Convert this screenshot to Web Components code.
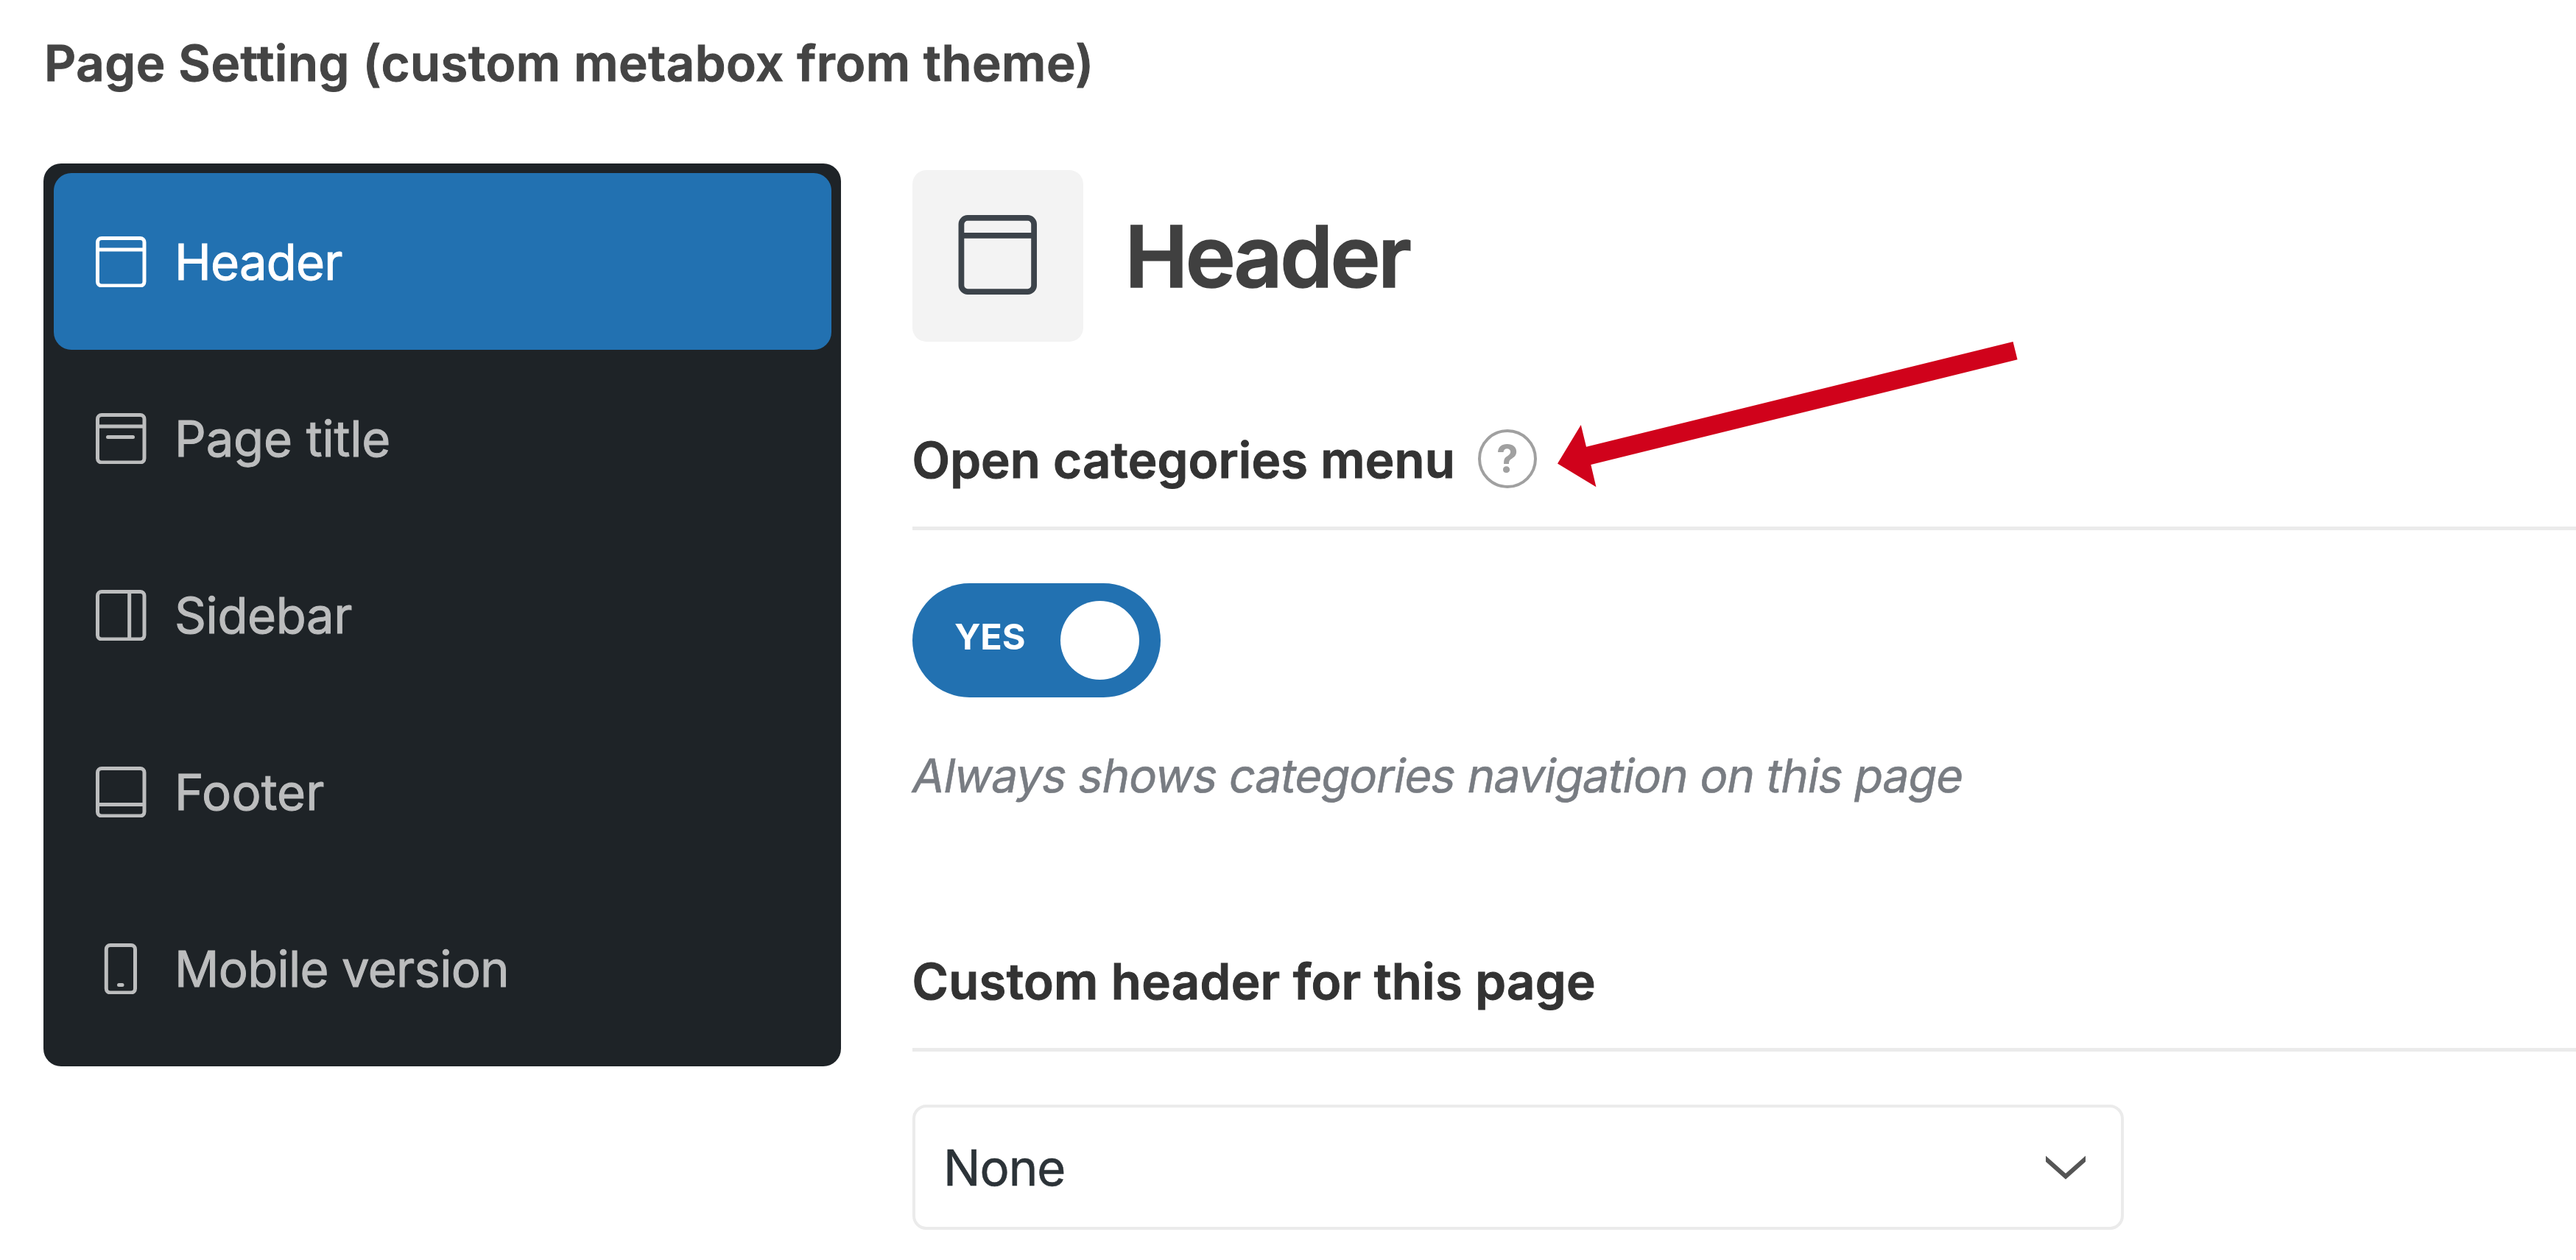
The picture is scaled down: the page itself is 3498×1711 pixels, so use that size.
<!DOCTYPE html>
<html lang="en">
<head>
<meta charset="utf-8">
<title>Page Setting</title>
<style>
  html, body { margin: 0; height: 100%; background: #fff; overflow: hidden; }
  body { font-family: Inter, "Liberation Sans", sans-serif; }
</style>
</head>
<body>
<settings-metabox heading="Page Setting (custom metabox from theme)">
  <settings-nav slot="nav">
    <nav-item icon="header" active style="--track:-.8px">Header</nav-item>
    <nav-item icon="title" style="--track:-.15px">Page title</nav-item>
    <nav-item icon="sidebar" style="--track:-.4px">Sidebar</nav-item>
    <nav-item icon="footer" style="--track:.15px">Footer</nav-item>
    <nav-item icon="mobile" style="--track:-.72px">Mobile version</nav-item>
  </settings-nav>
  <section-title icon="header">Header</section-title>
  <settings-field label="Open categories menu" help style="--space:120px;--track:.15px">
    <toggle-switch>YES</toggle-switch>
    <span slot="note">Always shows categories navigation on this page</span>
  </settings-field>
  <settings-field label="Custom header for this page" style="--space:201px;--track:.31px">
    <select-box>None</select-box>
  </settings-field>
  <pointer-arrow slot="overlay"></pointer-arrow>
</settings-metabox>

<script>
const define = (name, render) => customElements.define(name, class extends HTMLElement {
  constructor() {
    super();
    this.attachShadow({ mode: 'open' });
  }
  connectedCallback() {
    this.shadowRoot.innerHTML = render(this);
  }
});

const frame = '<rect x="2.5" y="2.5" width="63.5" height="64.5" rx="5.5"/>';
const glyphs = {
  header: frame + '<path d="M2.5 18H66"/>',
  title: frame + '<path d="M2.5 18H66"/><path d="M16.5 32.5H50.5" stroke-linecap="round"/>',
  sidebar: frame + '<path d="M45.7 2.5V67"/>',
  footer: frame + '<path d="M2.5 51.6H66"/>',
  mobile: '<rect x="14.3" y="2.5" width="39.2" height="64.5" rx="5.5"/><path d="M31.5 56.5H36" stroke-linecap="round"/>'
};

define('line-icon', el => `
  <style>
    :host { display: block; flex: none; width: var(--icon-w, 68.5px); height: var(--icon-h, 69.5px); }
    svg { display: block; width: 100%; height: 100%; fill: none; stroke: currentColor; stroke-width: 5; }
  </style>
  <svg viewBox="0 0 68.5 69.5">${glyphs[el.getAttribute('name')]}</svg>`);

define('settings-metabox', el => `
  <style>
    :host { display: flex; flex-direction: column; position: relative; box-sizing: border-box;
            width: 100%; height: 100%; padding: 46px 0 0 59px; overflow: hidden; }
    h2 { margin: 0 0 96px 1px; font-size: 67px; line-height: 80px; font-weight: 600;
         letter-spacing: .55px; color: #444; white-space: nowrap; -webkit-text-stroke: 1px currentColor; }
    .body { display: grid; grid-template-columns: 1083px 1fr; column-gap: 96.5px; align-items: start; }
    main { display: flex; flex-direction: column; padding-top: 9px; min-width: 0; }
  </style>
  <h2>${el.getAttribute('heading')}</h2>
  <div class="body">
    <slot name="nav"></slot>
    <main><slot></slot></main>
  </div>
  <slot name="overlay"></slot>`);

define('settings-nav', () => `
  <style>
    :host { display: flex; flex-direction: column; padding: 13px 13.5px; border-radius: 24px; background: #1e2327; }
  </style>
  <slot></slot>`);

define('nav-item', el => `
  <style>
    :host { display: flex; align-items: center; gap: 38.5px; height: 240px; box-sizing: border-box;
            padding: 1px 57.5px 0; border-radius: 24px; color: #bcbdbe;
            font-size: 67px; line-height: 80px; letter-spacing: var(--track, 0); white-space: nowrap;
            -webkit-text-stroke: 1px currentColor; }
    :host([active]) { background: #2271b1; color: #fff; }
  </style>
  <line-icon name="${el.getAttribute('icon')}"></line-icon>
  <span><slot></slot></span>`);

define('section-title', el => `
  <style>
    :host { display: flex; align-items: center; gap: 57px; }
    .tile { display: flex; align-items: center; justify-content: center; box-sizing: border-box;
            width: 232px; height: 233px; padding-bottom: 3px; border-radius: 19px; background: #f3f3f3; color: #3c434a;
            --icon-w: 107.5px; --icon-h: 108px; }
    h3 { margin: 2px 0 0; font-size: 115px; line-height: 140px; font-weight: 600; letter-spacing: -3.4px;
         color: #404040; -webkit-text-stroke: 1.6px currentColor; }
  </style>
  <div class="tile"><line-icon name="${el.getAttribute('icon')}"></line-icon></div>
  <h3><slot></slot></h3>`);

define('help-tip', () => `
  <style>
    :host { display: flex; align-items: center; justify-content: center; box-sizing: border-box;
            width: 80px; height: 80px; border: 4.5px solid #a0a0a0; border-radius: 50%;
            color: #a0a0a0; font-size: 53px; font-weight: 700; line-height: 60px; }
  </style>
  <span>?</span>`);

define('settings-field', el => `
  <style>
    :host { display: flex; flex-direction: column; margin-top: var(--space); }
    header { display: flex; align-items: center; gap: 31px; height: 80px; padding-bottom: 51px; border-bottom: 5px solid #ebebeb; }
    h4 { margin: 1px 0 0; font-size: 67px; line-height: 80px; font-weight: 600;
         letter-spacing: var(--track, 0); color: #333; white-space: nowrap; -webkit-text-stroke: 1px currentColor; }
    help-tip { margin-bottom: 3px; }
    .control { display: flex; margin-top: 72px; }
    /* Slanted roman letterforms, sheared around the text baseline. */
    ::slotted([slot=note]) { display: block; align-self: flex-start; margin: 68px 0 0 -3px; font-size: 63px; line-height: 76px;
         letter-spacing: -.83px; color: #787c82; white-space: nowrap; -webkit-text-stroke: .6px currentColor;
         transform: skewX(-10deg); transform-origin: 0 61px; }
  </style>
  <header><h4>${el.getAttribute('label')}</h4>${el.hasAttribute('help') ? '<help-tip></help-tip>' : ''}</header>
  <div class="control"><slot></slot></div>
  <slot name="note"></slot>`);

define('toggle-switch', () => `
  <style>
    :host { display: flex; align-items: center; justify-content: space-between; box-sizing: border-box;
            width: 337px; height: 155px; padding: 0 29px 0 57.5px; border-radius: 78px; background: #2271b1;
            color: #fff; font-size: 48.6px; line-height: 60px; font-weight: 700; letter-spacing: -.2px; }
    span { margin-bottom: 9px; }
    i { width: 107px; height: 107px; border-radius: 50%; background: #fff; }
  </style>
  <span><slot></slot></span><i></i>`);

define('select-box', () => `
  <style>
    :host { display: flex; align-items: center; justify-content: space-between; box-sizing: border-box;
            width: 1645px; height: 170px; padding: 0 48px 0 38.5px; border: 4px solid #ebebeb; border-radius: 19px;
            color: #2c3338; font-size: 67px; line-height: 80px; letter-spacing: -1px; -webkit-text-stroke: .6px currentColor; }
    span { margin-top: 2px; }
    svg { display: block; width: 54px; height: 40px; fill: none; stroke: #555; stroke-width: 6; }
  </style>
  <span><slot></slot></span>
  <svg viewBox="0 0 54 40"><path d="M-4 5L27 32.4L58 5"/></svg>`);

define('pointer-arrow', () => `
  <style>
    :host { display: block; position: absolute; left: 2115px; top: 464px; width: 625px; height: 198px; }
    svg { display: block; width: 100%; height: 100%; fill: #d0021b; }
  </style>
  <svg viewBox="0 0 625 198"><path d="M0 165.5L31.8 113L39 142.7L618.5 0L624.5 24.3L45.3 167L52.4 197.3Z"/></svg>`);
</script>
</body>
</html>
